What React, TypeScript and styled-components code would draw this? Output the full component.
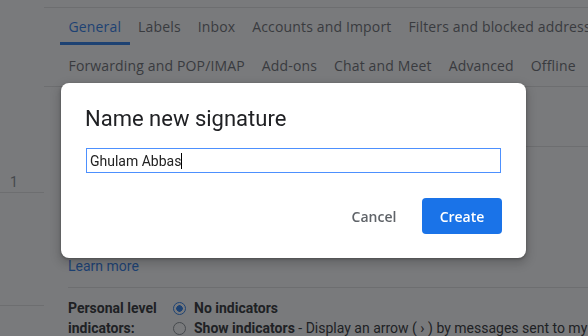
import styled, { createGlobalStyle } from 'styled-components';

const GlobalStyle = createGlobalStyle`
  html, body {
    margin: 0;
    padding: 0;
    background: #ffffff;
    overflow: hidden;
  }
  * {
    box-sizing: border-box;
  }
`;

const Page = styled.div`
  display: flex;
  width: 588px;
  height: 336px;
  overflow: hidden;
  font-family: Roboto, 'Liberation Sans', Arial, sans-serif;
  color: #202124;
`;

const Sidebar = styled.aside`
  width: 44px;
  display: flex;
  flex-direction: column;
`;

const SideCount = styled.div`
  flex: none;
  margin-top: 172px;
  height: 21px;
  line-height: 20px;
  padding-left: 10px;
  font-size: 14px;
  color: #80868b;
  border-bottom: 1px solid #e0e0e0;
`;

const SideBlock = styled.div`
  flex: none;
  height: 113px;
  border-bottom: 1px solid #e0e0e0;
`;

const Main = styled.main`
  flex: 1;
  min-width: 0;
  margin-top: 7px;
  border-top: 1px solid #e0e0e0;
  display: flex;
  flex-direction: column;
`;

const TabBar = styled.nav`
  flex: none;
  padding: 0 16px;
  border-bottom: 1px solid #e0e0e0;
  overflow: hidden;
`;

const TabRow = styled.div<{ $height: number }>`
  display: flex;
  height: ${(p) => p.$height}px;
  white-space: nowrap;
`;

const Tab = styled.div<{ $active?: boolean }>`
  display: flex;
  align-items: center;
  padding: 0 8.5px;
  font-family: 'Open Sans', Roboto, sans-serif;
  font-size: 14px;
  letter-spacing: 0.15px;
  color: ${(p) => (p.$active ? '#1a73e8' : '#5f6368')};
  box-shadow: ${(p) => (p.$active ? 'inset 0 -3px 0 #1a73e8' : 'none')};
`;

const Content = styled.section`
  flex: none;
  padding-left: 24px;
  display: flex;
  flex-direction: column;
`;

const Row = styled.div<{ $height: number }>`
  flex: none;
  height: ${(p) => p.$height}px;
  border-bottom: 1px solid #e0e0e0;
  display: flex;
  flex-direction: column;
  justify-content: flex-end;
  padding-bottom: 11px;
`;

const Link = styled.a`
  font-size: 14px;
  line-height: 20px;
  color: #1a73e8;
  text-decoration: none;
`;

const SettingRow = styled.div`
  display: grid;
  grid-template-columns: 105px 1fr;
  padding-top: 10px;
  font-size: 14px;
  line-height: 20px;
`;

const SettingLabel = styled.div`
  font-weight: 700;
  color: #202124;
`;

const Options = styled.div`
  display: flex;
  flex-direction: column;
  min-width: 0;
`;

const Option = styled.label`
  display: flex;
  align-items: center;
  gap: 8px;
  white-space: nowrap;
  overflow: hidden;
  color: #202124;
`;

const Radio = styled.span<{ $checked?: boolean }>`
  flex: none;
  width: 13px;
  height: 13px;
  border-radius: 50%;
  border: 1.5px solid ${(p) => (p.$checked ? '#1a73e8' : '#80868b')};
  background: ${(p) =>
    p.$checked ? 'radial-gradient(circle, #1a73e8 0 3px, #ffffff 3.5px)' : '#ffffff'};
`;

const Strong = styled.b`
  font-weight: 700;
`;

const Scrim = styled.div`
  position: fixed;
  inset: 0;
  background: rgba(32, 33, 36, 0.6);
`;

const Dialog = styled.div`
  position: fixed;
  left: 61px;
  top: 83px;
  width: 465px;
  height: 175px;
  padding: 22px 24px 24px 24px;
  background: #ffffff;
  border-radius: 8px;
  box-shadow: 0 4px 8px 3px rgba(0, 0, 0, 0.15), 0 1px 3px rgba(0, 0, 0, 0.3);
  display: flex;
  flex-direction: column;
`;

const Title = styled.h2`
  margin: 0;
  font-family: Roboto, sans-serif;
  font-size: 22px;
  font-weight: 400;
  line-height: 28px;
  color: #202124;
`;

const NameField = styled.div`
  margin: 15px 0 0 1px;
  width: 415px;
  height: 25px;
  border: 1px solid #4d90fe;
  padding-left: 3px;
  display: flex;
  align-items: center;
  font-family: Roboto, 'Liberation Sans', sans-serif;
  font-size: 14px;
  color: #222222;
`;

const Caret = styled.span`
  width: 1px;
  height: 16px;
  background: #000000;
`;

const Actions = styled.div`
  margin-top: 25px;
  display: flex;
  justify-content: flex-end;
  gap: 8px;
`;

const Button = styled.button<{ $primary?: boolean }>`
  width: 80px;
  height: 36px;
  border: none;
  border-radius: 4px;
  font-family: 'Open Sans', Roboto, sans-serif;
  font-size: 14px;
  font-weight: 600;
  cursor: pointer;
  background: ${(p) => (p.$primary ? '#1a73e8' : 'transparent')};
  color: ${(p) => (p.$primary ? '#ffffff' : '#5f6368')};
`;

const tabsTop = ['General', 'Labels', 'Inbox', 'Accounts and Import', 'Filters and blocked addresses'];
const tabsBottom = ['Forwarding and POP/IMAP', 'Add-ons', 'Chat and Meet', 'Advanced', 'Offline'];

export default function App() {
  return (
    <>
      <GlobalStyle />
      <Page>
        <Sidebar>
          <SideCount>1</SideCount>
          <SideBlock />
        </Sidebar>
        <Main>
          <TabBar>
            <TabRow $height={37}>
              {tabsTop.map((t) => (
                <Tab key={t} $active={t === 'General'}>
                  {t}
                </Tab>
              ))}
            </TabRow>
            <TabRow $height={41}>
              {tabsBottom.map((t) => (
                <Tab key={t}>{t}</Tab>
              ))}
            </TabRow>
          </TabBar>
          <Content>
            <Row $height={60} />
            <Row $height={141}>
              <Link href="#">Learn more</Link>
            </Row>
            <SettingRow>
              <SettingLabel>
                Personal level
                <br />
                indicators:
              </SettingLabel>
              <Options>
                <Option>
                  <Radio $checked />
                  <Strong>No indicators</Strong>
                </Option>
                <Option>
                  <Radio />
                  <span>
                    <Strong>Show indicators</Strong> - Display an arrow ( › ) by messages sent to my
                    address (not a mailing list)
                  </span>
                </Option>
              </Options>
            </SettingRow>
          </Content>
        </Main>
      </Page>
      <Scrim />
      <Dialog role="dialog" aria-label="Name new signature">
        <Title>Name new signature</Title>
        <NameField>
          Ghulam Abbas
          <Caret />
        </NameField>
        <Actions>
          <Button>Cancel</Button>
          <Button $primary>Create</Button>
        </Actions>
      </Dialog>
    </>
  );
}
